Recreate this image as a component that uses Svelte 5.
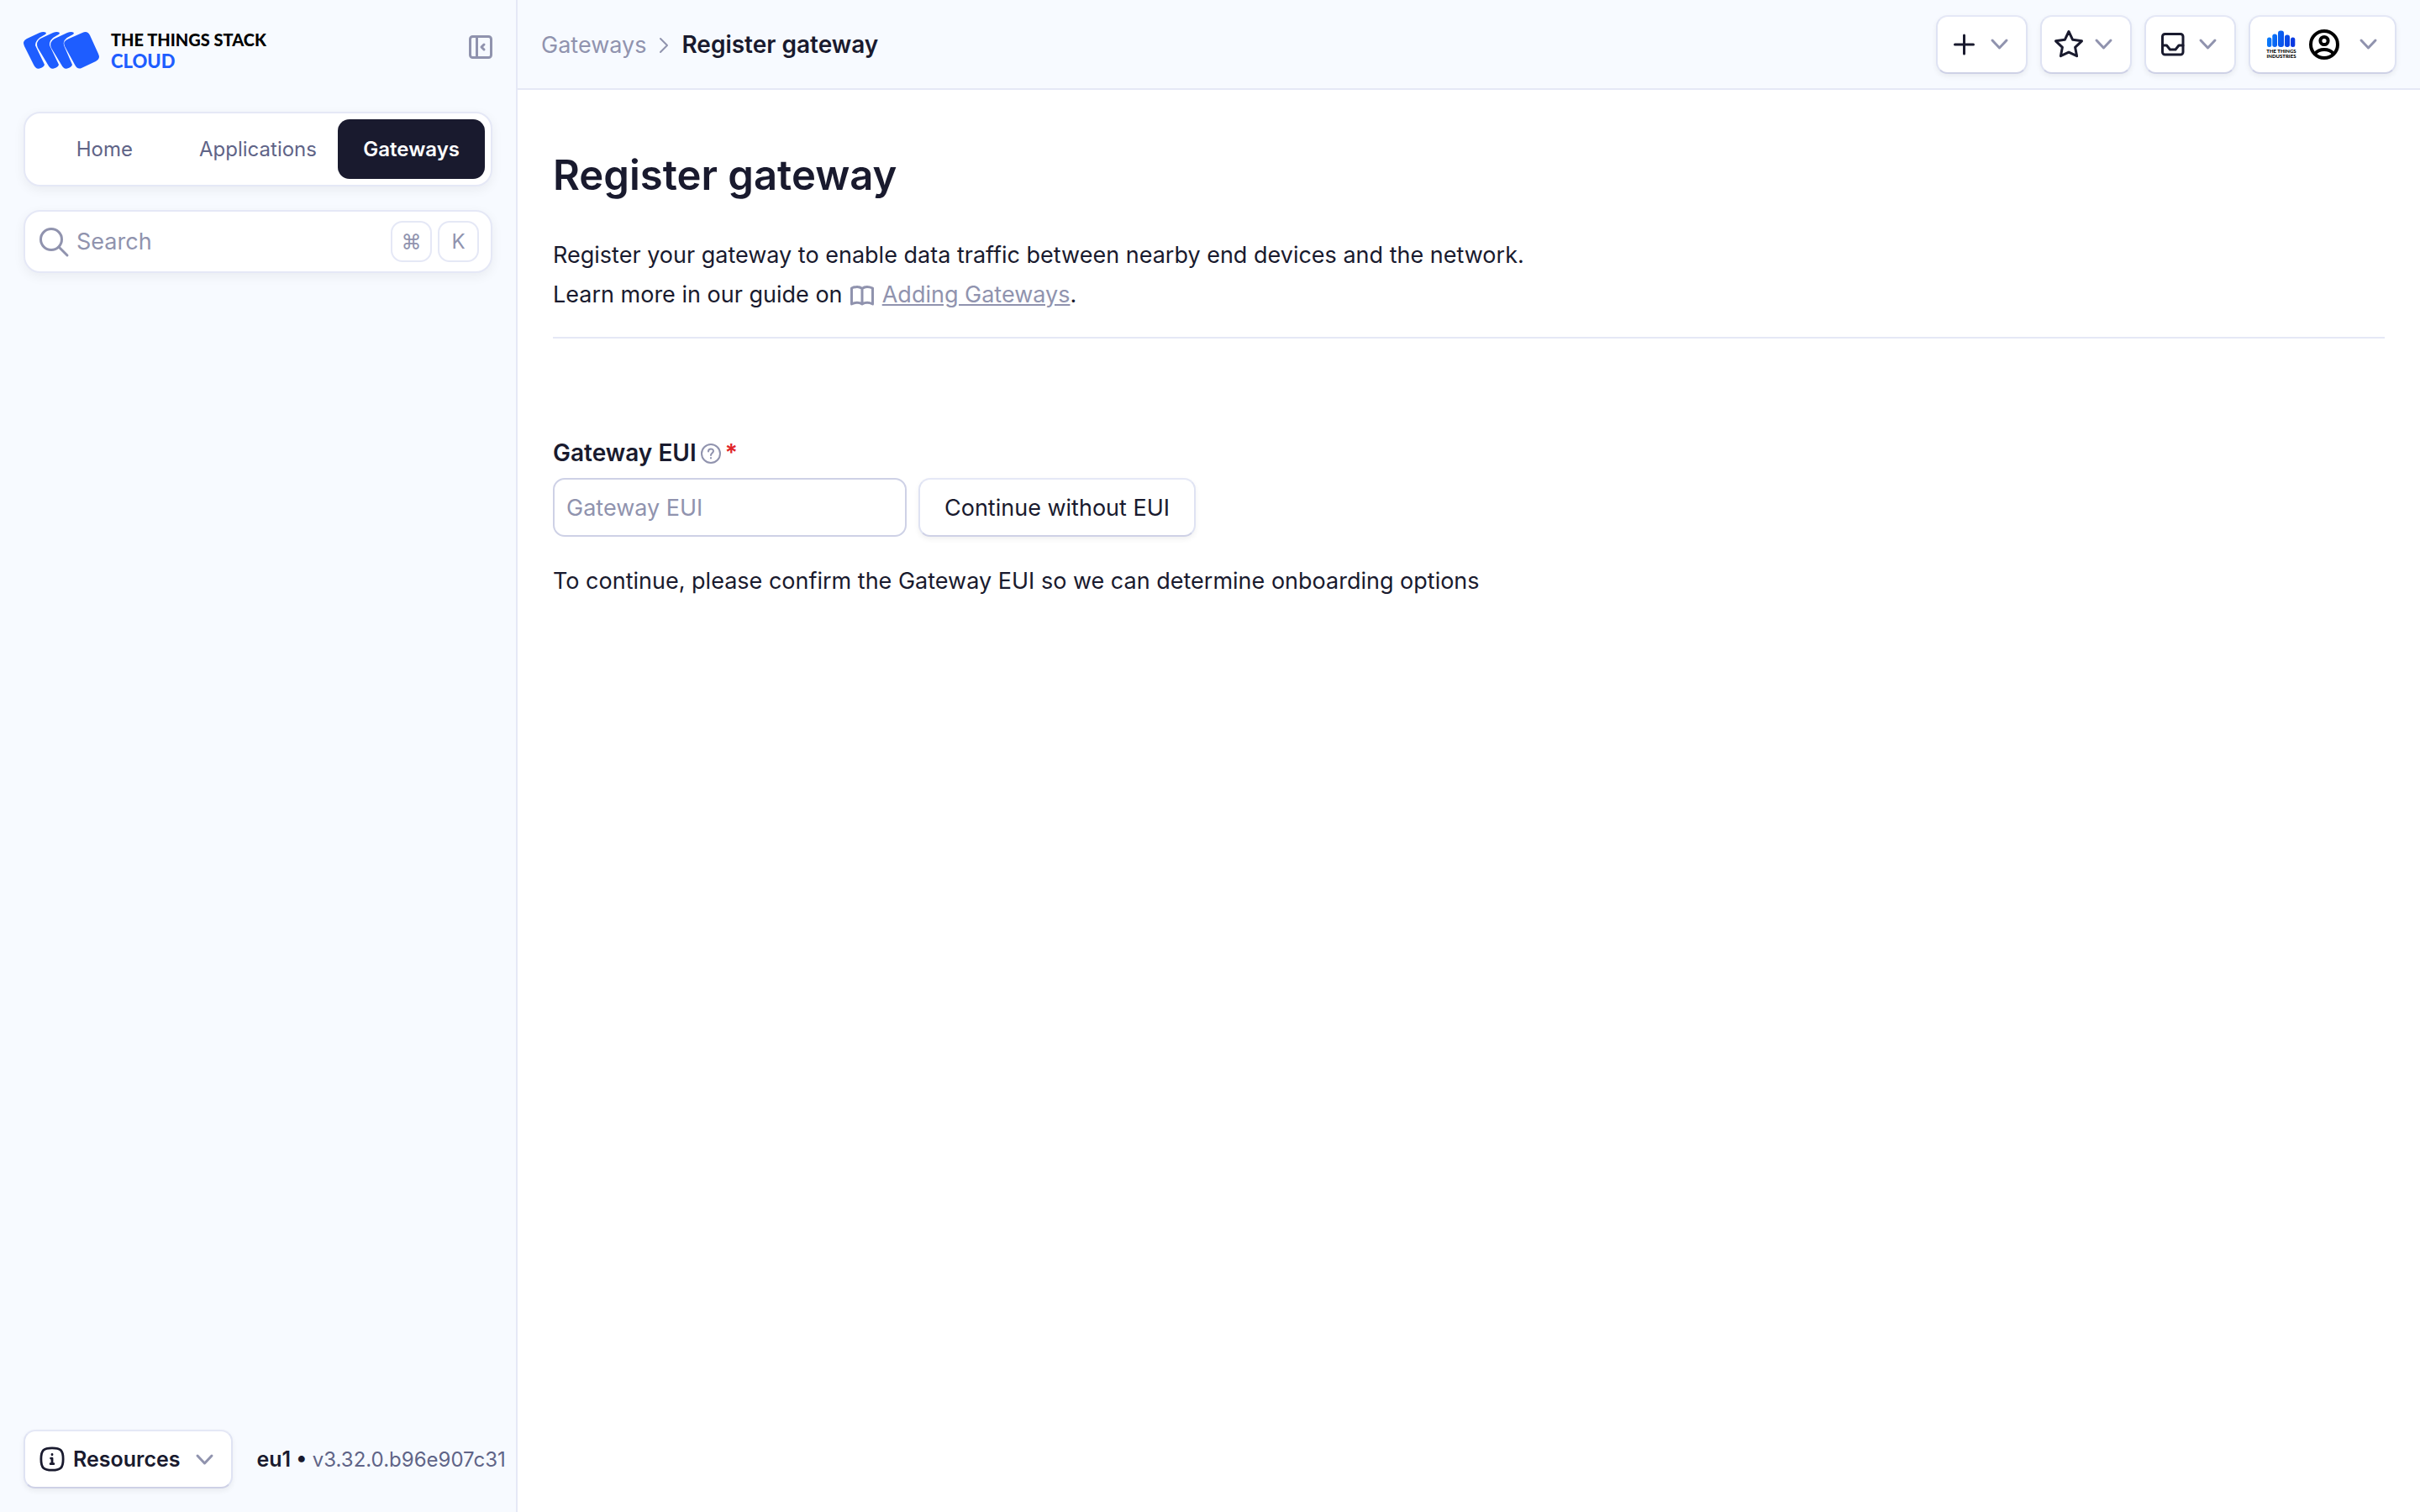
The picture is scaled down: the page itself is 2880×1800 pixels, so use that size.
<script>
  let eui = $state('');
  let query = $state('');
  const tabs = ['Home', 'Applications', 'Gateways'];
</script>

{#snippet chevron()}
  <svg class="chevron" viewBox="0 0 21 13" aria-hidden="true"><path d="M2 2l8.500 9 8.500-9" /></svg>
{/snippet}

<div class="app">
  <aside>
    <div class="brand">
      <a class="logo" href="#home" aria-label="The Things Stack Cloud">
        <svg class="mark" viewBox="0 0 90 44" aria-hidden="true">
          <path d="M4 8L19 1Q24-1 27 1Q27 3 24 4Q14 9 14 16L25 39Q24 42 19 43.500Q15 45 12 39L1 17Q-2 11 4 8Z" />
          <path d="M20 8L35 1Q40-1 43 1Q43 3 40 4Q30 9 31 16L42 39Q41 42 36 43.500Q32 45 29 39L17 19Q14 12 20 8Z" />
          <path d="M37 8L52 1Q57-1 60 1Q60 3 57 4Q46 9 48 16L58 39Q57 42 52 43.500Q48 45 45 39L33 19Q30 12 37 8Z" />
          <path d="M54 8L70 1Q76-2 79 4L89 26Q92 32 86 35L69 43Q64 45 61 39L49 17Q46 11 54 8Z" />
        </svg>
        <span class="wordmark"><b>THE THINGS STACK</b><b class="blue">CLOUD</b></span>
      </a>
      <button class="collapse" type="button" aria-label="Collapse sidebar">
        <svg viewBox="0 0 28 28" aria-hidden="true"><rect x="1.500" y="1.500" width="25" height="25" rx="3" /><path d="M9.500 2v24M18 11l-3 3 3 3" /></svg>
      </button>
    </div>

    <nav class="tabs" aria-label="Main">
      {#each tabs as tab}
        <a href="#{tab.toLowerCase()}" class:active={tab === 'Gateways'}>{tab}</a>
      {/each}
    </nav>

    <label class="search">
      <svg viewBox="0 0 36 36" aria-hidden="true"><circle cx="15" cy="15" r="12.500" /><path d="M24 24l10 10" /></svg>
      <input type="search" placeholder="Search" aria-label="Search" bind:value={query} />
      <kbd>⌘</kbd><kbd>K</kbd>
    </label>

    <footer>
      <button class="button resources" type="button">
        <svg class="info" viewBox="0 0 32 32" aria-hidden="true"><path d="M16 2C27 2 30 5 30 16S27 30 16 30 2 27 2 16 5 2 16 2Z" /><path d="M16 10v.5M14.500 15H16v7M14 22h4" /></svg>
        <span>Resources</span>
        {@render chevron()}
      </button>
      <p><strong>eu1 •</strong> v3.32.0.b96e907c31</p>
    </footer>
  </aside>

  <div class="page">
    <header>
      <nav class="crumbs" aria-label="Breadcrumb">
        <a href="#gateways">Gateways</a>
        <svg viewBox="0 0 10 18" aria-hidden="true"><path d="M1 1l8 8-8 8" /></svg>
        <strong>Register gateway</strong>
      </nav>
      <div class="actions">
        <button class="button" type="button" aria-label="Add">
          <svg class="icon" viewBox="0 0 36 36" aria-hidden="true"><path d="M17.500 7v22M6.500 18h22" /></svg>
          {@render chevron()}
        </button>
        <button class="button" type="button" aria-label="Bookmarks">
          <svg class="icon" viewBox="0 0 36 36" aria-hidden="true"><path d="M18 2.500l4.700 9.800 10.800 1.500-7.900 7.500 2 10.400L18 27.200 8.400 31.700l2-10.400-7.900-7.500 10.800-1.500Z" /></svg>
          {@render chevron()}
        </button>
        <button class="button" type="button" aria-label="Notifications">
          <svg class="icon" viewBox="0 0 36 36" aria-hidden="true"><rect x="5.500" y="5.500" width="24.500" height="24.500" rx="3" /><path d="M6 19h4.500l4 5h6.500l4-5H30" /></svg>
          {@render chevron()}
        </button>
        <button class="button profile" type="button" aria-label="Account">
          <svg class="org" viewBox="0 0 34 34" aria-hidden="true">
            <defs><linearGradient id="bars" x1="0" y1="0" x2="34" y2="10" gradientUnits="userSpaceOnUse"><stop stop-color="#0a84ff" /><stop offset="1" stop-color="#0a35e0" /></linearGradient></defs>
            <g fill="url(#bars)">
              <rect x="0" y="8.500" width="5.300" height="11.500" rx="2.500" />
              <rect x="6.300" y="4.500" width="5.700" height="15.500" rx="2.700" />
              <rect x="13" y="0.500" width="7" height="19.500" rx="3" />
              <rect x="21" y="5.500" width="6" height="14.500" rx="2.700" />
              <rect x="28" y="8.500" width="5.300" height="11.500" rx="2.500" />
            </g>
            <text x="17" y="27">THE THINGS</text>
            <text x="17" y="33">INDUSTRIES</text>
          </svg>
          <svg class="icon avatar" viewBox="0 0 36 36" aria-hidden="true"><circle cx="18" cy="18" r="16" /><circle cx="18" cy="13.500" r="4.600" /><path d="M7 29c3-4 7-5 11-5s8 1 11 5" /></svg>
          {@render chevron()}
        </button>
      </div>
    </header>

    <main>
      <h1>Register gateway</h1>
      <p class="intro">
        Register your gateway to enable data traffic between nearby end devices and the network.<br />
        Learn more in our guide on
        <svg class="book" viewBox="0 0 28 24" aria-hidden="true"><path d="M14 3.500C11 1 6 1 1.500 3v19c4-2 9-2 12.500 0 3.500-2 8.500-2 12.500 0V3c-4.500-2-9.500-2-12.500.5ZM14 3.500v18" /></svg>
        <a href="#adding-gateways">Adding Gateways</a>.
      </p>
      <hr />
      <form>
        <div class="label">
          <label for="eui">Gateway EUI</label>
          <svg class="help" viewBox="0 0 24 24" aria-hidden="true"><circle cx="12" cy="12" r="11" /><path d="M9 9.500c0-4 6-4 6-.5 0 2-3 2.500-3 5M12 17v.5" /></svg>
          <span class="required">*</span>
        </div>
        <div class="row">
          <input id="eui" type="text" placeholder="Gateway EUI" bind:value={eui} />
          <button class="button wide" type="button">Continue without EUI</button>
        </div>
        <p>To continue, please confirm the Gateway EUI so we can determine onboarding options</p>
      </form>
    </main>
  </div>
</div>

<style>
  :global(body) { margin: 0; background: #fff; }
  .app {
    display: grid;
    grid-template-columns: 616px 1fr;
    min-height: 100vh;
    color: #191a2e;
    font: 400 27px/47px Inter, sans-serif;
  }
  .app *, .app { box-sizing: border-box; }
  button, input, kbd { font: inherit; color: inherit; }
  a { color: inherit; text-decoration: none; }
  p { margin: 0; }
  strong { font-weight: 600; }
  svg { flex: none; fill: none; stroke: currentColor; stroke-width: 3; stroke-linecap: round; stroke-linejoin: round; overflow: visible; }

  aside {
    display: flex;
    flex-direction: column;
    padding: 35px 28px 28px;
    background: #f7faff;
    border-right: 2px solid #e5e8f6;
  }
  .brand { display: flex; justify-content: space-between; align-items: flex-start; }
  .logo { display: flex; align-items: center; gap: 14px; }
  .mark { width: 90px; height: 44px; fill: #1e5dff; stroke: none; }
  .wordmark { display: grid; font: 900 20px/25px Lato, sans-serif; color: #000; }
  .wordmark b { font-weight: 900; }
  .wordmark .blue { color: #1e5dff; font-size: 22px; }
  .collapse { padding: 7px 0; border: 0; background: none; color: #9093ae; display: flex; }
  .collapse svg { width: 28px; height: 28px; }

  .tabs, .search {
    background: #fff;
    border: 2px solid #e5e8f6;
    border-radius: 20px;
    box-shadow: 0 4px 14px rgb(0 0 0 / 6%);
  }
  .tabs { display: grid; grid-template-columns: 1fr 1fr 1fr; gap: 8px; margin-top: 48px; padding: 7px; }
  .tabs a { color: #5f6487; font-size: 24px; line-height: 71px; text-align: center; border-radius: 14px; }
  .tabs .active { background: #191a2e; color: #fff; font-weight: 600; }
  .search { display: flex; align-items: center; gap: 7px; height: 75px; margin-top: 28px; padding: 0 14px 0 16px; color: #9093ae; }
  .search svg { width: 36px; height: 36px; }
  .search input { flex: 1; min-width: 0; padding: 0 0 0 2px; border: 0; outline: 0; background: none; }
  input::placeholder { color: #9093ae; opacity: 1; }
  kbd { width: 49px; height: 49px; border: 2px solid #e5e8f6; border-radius: 14px; font-size: 24px; line-height: 45px; text-align: center; }

  footer { display: flex; align-items: center; gap: 29px; margin-top: auto; margin-right: -28px; font-size: 24px; color: #5f6487; white-space: nowrap; }
  footer strong { color: #191a2e; font-size: 25px; }

  .button {
    display: flex;
    align-items: center;
    height: 70px;
    padding: 0 21px 0 14px;
    gap: 13px;
    color: #191a2e;
    background: #fff;
    border: 2px solid #dfe3f3;
    border-top-color: #e5e8f6;
    border-bottom-color: #ced1e6;
    border-radius: 14px;
    box-shadow: 0 3px 6px rgb(0 0 0 / 6%);
  }
  .chevron { width: 21px; height: 13px; color: #9093ae; }
  .resources { gap: 10px; padding-left: 17px; font-size: 25px; font-weight: 600; }
  .resources .chevron { margin-left: 8px; }
  .info { width: 30px; height: 30px; }

  .page { min-width: 0; }
  header {
    display: flex;
    align-items: center;
    justify-content: space-between;
    height: 107px;
    padding: 0 28px;
    background: #f7faff;
    border-bottom: 2px solid #e5e8f6;
  }
  .crumbs { display: flex; align-items: center; gap: 16px; padding-top: 2px; }
  .crumbs strong { font-size: 28px; }
  .crumbs a, .crumbs svg { color: #9093ae; }
  .crumbs svg { width: 10px; height: 18px; stroke-width: 2; }
  .actions { display: flex; gap: 15px; }
  .icon { width: 36px; height: 36px; }
  .profile { gap: 16px; padding-left: 20px; color: #000; }
  .profile .chevron { margin-left: 8px; }
  .avatar { stroke-width: 4; }
  .org { width: 34px; height: 34px; stroke: none; }
  .org text { fill: #000; font: 900 6px Lato, sans-serif; text-anchor: middle; }

  main { padding: 70px 42px; }
  h1 { margin: 0; font-size: 49px; font-weight: 600; line-height: 64px; }
  .intro { margin-top: 39px; }
  .intro a { color: #9093ae; text-decoration: underline; }
  .book { width: 28px; height: 24px; margin: 0 2px; vertical-align: -4px; color: #9093ae; }
  hr { height: 2px; margin: 27px 0 113px; border: 0; background: #e5e8f6; }
  .label { display: flex; align-items: center; gap: 5px; font-size: 28px; font-weight: 600; }
  .help { width: 24px; height: 24px; color: #9093ae; stroke-width: 2; }
  .required { color: #e0252b; }
  .row { display: flex; gap: 14px; margin: 6px 0 29px; }
  .row input { width: 421px; height: 70px; padding: 0 14px; border: 2px solid #ced1e6; border-radius: 14px; background: #fff; }
  .wide { padding: 0 29px; }
</style>
